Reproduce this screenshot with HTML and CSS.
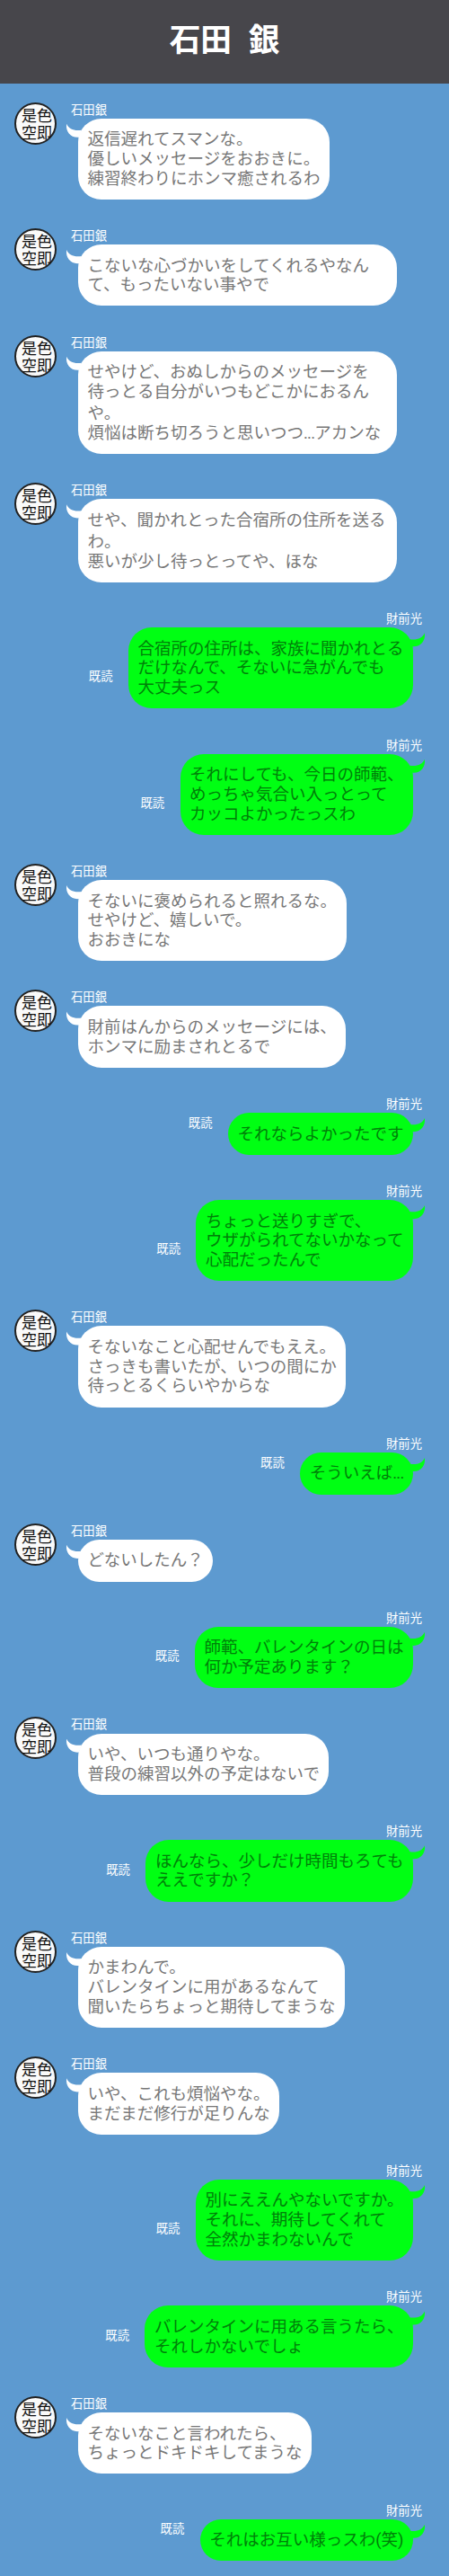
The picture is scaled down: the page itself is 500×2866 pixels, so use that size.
FILE: index.html
```html
<!DOCTYPE html>
<html lang="ja">

<head>
    <meta charset="UTF-8">
    <meta name="viewport" content="width=device-width, initial-scale=1.0">
    <title>石田 銀</title>
    <link rel="stylesheet" href="styles.css">
</head>

<body>
    <header class="header">
        <h1 class="title">石田 銀</h1>
    </header>

    <main class="talk" id="talk"></main>

    <script>
        const talk = document.getElementById('talk')

        // who: 'gin' is the left side, 'hikaru' is the right side
        const messages = [
            { who: 'gin', text: ['返信遅れてスマンな。', '優しいメッセージをおおきに。', '練習終わりにホンマ癒されるわ'] },
            { who: 'gin', wide: true, text: ['こないな心づかいをしてくれるやなん', 'て、もったいない事やで'] },
            { who: 'gin', wide: true, text: ['せやけど、おぬしからのメッセージを', '待っとる自分がいつもどこかにおるん', '<span class="low">や。</span>', '煩悩は断ち切ろうと思いつつ...アカンな'] },
            { who: 'gin', wide: true, text: ['せや、聞かれとった合宿所の住所を送る', '<span class="low">わ。</span>', '悪いが少し待っとってや、ほな'] },
            { who: 'hikaru', text: ['合宿所の住所は、家族に聞かれとる', 'だけなんで、そないに急がんでも', '大丈夫っス'] },
            { who: 'hikaru', text: ['それにしても、今日の師範、', 'めっちゃ気合い入っとって', 'カッコよかったっスわ'] },
            { who: 'gin', text: ['そないに褒められると照れるな。', 'せやけど、嬉しいで。', 'おおきにな'] },
            { who: 'gin', text: ['財前はんからのメッセージには、', 'ホンマに励まされとるで'] },
            { who: 'hikaru', text: ['それならよかったです'] },
            { who: 'hikaru', text: ['ちょっと送りすぎで、', 'ウザがられてないかなって', '心配だったんで'] },
            { who: 'gin', text: ['そないなこと心配せんでもええ。', 'さっきも書いたが、いつの間にか', '待っとるくらいやからな'] },
            { who: 'hikaru', text: ['そういえば...'] },
            { who: 'gin', text: ['どないしたん？'] },
            { who: 'hikaru', text: ['師範、バレンタインの日は', '何か予定あります？'] },
            { who: 'gin', text: ['いや、いつも通りやな。', '普段の練習以外の予定はないで'] },
            { who: 'hikaru', text: ['ほんなら、少しだけ時間もろても', 'ええですか？'] },
            { who: 'gin', text: ['かまわんで。', 'バレンタインに用があるなんて', '聞いたらちょっと期待してまうな'] },
            { who: 'gin', text: ['いや、これも煩悩やな。', 'まだまだ修行が足りんな'] },
            { who: 'hikaru', text: ['別にええんやないですか。', 'それに、期待してくれて', '全然かまわないんで'] },
            { who: 'hikaru', text: ['バレンタインに用ある言うたら、', 'それしかないでしょ'] },
            { who: 'gin', text: ['そないなこと言われたら、', 'ちょっとドキドキしてまうな'] },
            { who: 'hikaru', text: ['それはお互い様っスわ(笑)'] }
        ]

        messages.forEach((item) => {
            // three dots are drawn tighter than the rest of the text
            const lines = item.text.join('<br>').replace('...', '<span class="dots">...</span>')
            const text = `<p class="bubble ${item.wide ? 'wide' : ''}">${lines}</p>`
            if (item.who === 'gin') {
                talk.innerHTML += `
                <div class="message left">
                    <div class="icon">色即<br>是空</div>
                    <div class="body">
                        <span class="name">石田銀</span>
                        ${text}
                    </div>
                </div>`
            } else {
                talk.innerHTML += `
                <div class="message right">
                    <span class="read">既読</span>
                    <div class="body">
                        <span class="name">財前光</span>
                        ${text}
                    </div>
                </div>`
            }
        })
    </script>
</body>

</html>
```
FILE: styles.css
```css
body {
    margin: 0;
    background-color: #5d9ad0;
    font-family: Roboto, "Noto Sans CJK JP", sans-serif;
}

.header {
    height: 93px;
    background-color: #47464b;
    text-align: center;
}

.title {
    margin: 0;
    color: #fff;
    font-size: 34.7px;
    font-weight: bold;
    line-height: 91px;
    word-spacing: 10px;
}

.talk {
    padding-top: 20.6px;
}

.message {
    display: flex;
    margin-bottom: 32.2px;
}

.message:last-child {
    margin-bottom: 0;
}

.right {
    justify-content: flex-end;
    align-items: flex-end;
    padding-right: 40px;
}

.icon {
    flex: none;
    box-sizing: border-box;
    width: 47px;
    height: 47px;
    margin: 0 24px 0 16px;
    padding: 4px 3px 0 0;
    border: 2px solid #222;
    border-radius: 50%;
    background-color: #fafafa;
    color: #111;
    font-family: "Noto Sans CJK JP", sans-serif;
    font-size: 17px;
    line-height: 17px;
    letter-spacing: 2px;
    writing-mode: vertical-rl;
}

.body {
    display: flex;
    flex-direction: column;
}

.name {
    height: 18.1px;
    color: #fff;
    font-size: 13.33px;
    line-height: 18px;
}

.left .name {
    margin-left: -8px;
}

.right .name {
    margin-right: -10px;
    text-align: right;
}

.read {
    margin: 0 17.5px 26px 0;
    color: #fff;
    font-size: 13.33px;
    line-height: 18px;
}

.bubble {
    position: relative;
    box-sizing: border-box;
    margin: 0;
    padding: 13.5px 10.5px 11.5px;
    border-radius: 26px;
    font-size: 18.5px;
    line-height: 21.7px;
    white-space: nowrap;
}

.left .bubble {
    align-self: flex-start;
    background-color: #fff;
    color: #777;
}

.right .bubble {
    background-color: #00ff13;
    color: #008009;
}

.wide {
    width: 355px;
}

.dots {
    letter-spacing: -0.8px;
}

.low {
    display: inline-block;
    padding-top: 2.5px;
}

/* curved tail of the bubble */
.bubble::before {
    content: "";
    position: absolute;
    top: 6px;
    left: -13px;
    width: 18px;
    height: 16px;
    background-color: #fff;
    clip-path: path("M0 0 C3 6 8 8 17 7 L14 15 C5 16 -1 9 0 0 Z");
}

.right .bubble::before {
    left: auto;
    right: -13px;
    background-color: #00ff13;
    transform: scaleX(-1);
}
```
